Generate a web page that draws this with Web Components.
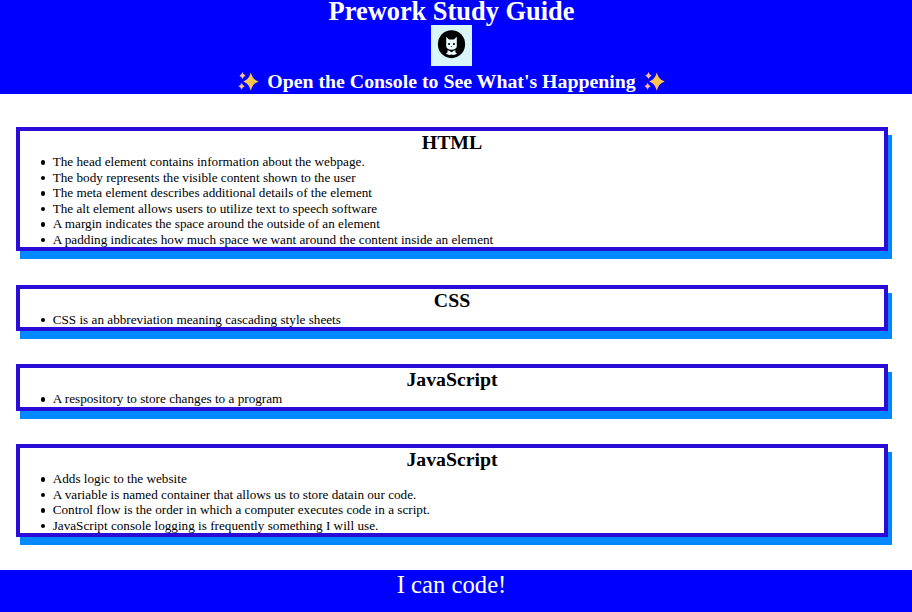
<!DOCTYPE html>
<html lang="en">
<head>
<meta charset="utf-8">
<title>Prework Study Guide</title>
<style>
body{margin:0;background:#fff;font-family:"Liberation Serif","Times New Roman",serif;color:#000}
</style>
</head>
<body>
<study-page></study-page>
<script>
function define(name, html){
  const t=document.createElement('template');
  t.innerHTML=html;
  customElements.define(name,class extends HTMLElement{
    constructor(){super();this.attachShadow({mode:'open'}).append(t.content.cloneNode(true));}
  });
}
define('spark-icon',`<style>:host{display:inline-block;width:21px;height:21px}svg{display:block}</style>
<svg width="21" height="21" viewBox="0 0 21 21"><path fill="#ffc44e" d="M12.8 1.5C14.6 7 16 8.5 20.8 10.5C16 12.5 14.6 14 12.8 19.8C11 14 9.6 12.5 5.2 10.5C9.6 8.5 11 7 12.8 1.5Z"/><path fill="#f7bba6" d="M4.5 1Q5.3 4 7.6 4.8Q5.3 5.6 4.5 8Q3.7 5.6 1.4 4.8Q3.7 4 4.5 1ZM3.6 11.8Q4.4 14.5 6.8 15.3Q4.4 16.1 3.6 18.8Q2.8 16.1 .4 15.3Q2.8 14.5 3.6 11.8Z"/></svg>`);
define('cat-logo',`<style>:host{display:block;width:41px;height:41px;background:#d9f5f7}svg{display:block}</style>
<svg width="41" height="41" viewBox="0 0 41 41"><ellipse cx="20.5" cy="19.2" rx="13.6" ry="14"/><g fill="#effcfc"><path d="M15.2 11.8L18 14.4H23L25.8 11.8V21.5Q25.3 24.5 20.5 24.7Q15.7 24.5 15.2 21.5Z"/><path d="M16.6 25.2L19.3 26V27H21.7V26L24.4 25.2V27.3L26 28.6Q23.5 30.6 20.5 29.6Q17.5 30.6 15 28.6L16.6 27.3Z"/></g><ellipse cx="18.1" cy="19" rx="1.1" ry="1.1"/><ellipse cx="22.9" cy="19" rx="1.1" ry="1.1"/><path d="M19.7 21H21.3L20.5 22Z"/></svg>`);
define('page-banner',`<style>:host{display:flex;flex-direction:column;align-items:center;box-sizing:border-box;height:94px;padding-right:9px;background:#00f;color:#fff}
h1{margin:0 0 3px;font-size:26.4px;line-height:22px}
h2{display:flex;gap:8px;margin:4px 0 0;font-size:19.82px;line-height:23px;white-space:nowrap}spark-icon{margin-top:1px}</style>
<h1><slot></slot></h1><cat-logo></cat-logo><h2><spark-icon></spark-icon><slot name="note"></slot><spark-icon></spark-icon></h2>`);
define('topic-card',`<style>:host{display:block;box-sizing:border-box;border:4px solid #2a0bd8;box-shadow:4px 8px 0 #0088ff;font-size:13.2px;background:#fff}
h2{margin:0;text-align:center;font-size:19.8px;line-height:23px}
ul{margin:0;padding:0 0 0 20.6px;line-height:15.55px}</style>
<h2><slot name="title"></slot></h2><ul><slot></slot></ul>`);
define('topic-item',`<style>:host{display:flex;align-items:center;white-space:nowrap}:host::before{content:"";width:4.6px;height:4.6px;margin:1px 7.5px 0 0;border-radius:50%;background:#000}</style><slot></slot>`);
define('page-footer',`<style>:host{display:block;box-sizing:border-box;height:41.7px;padding-right:9px;background:#00f;color:#fff;text-align:center;font-size:24.7px;line-height:29px}</style><slot></slot>`);
define('study-page',`<style>:host{display:flex;flex-direction:column;height:612px;overflow:hidden}
main{display:flex;flex-direction:column;gap:33.3px;box-sizing:border-box;padding:33px 24px 0 16px;height:476.3px}</style>
<page-banner>Prework Study Guide<span slot="note">Open the Console to See What's Happening</span></page-banner>
<main>
<topic-card><span slot="title">HTML</span><topic-item>The head element contains information about the webpage.</topic-item><topic-item>The body represents the visible content shown to the user</topic-item><topic-item>The meta element describes additional details of the element</topic-item><topic-item>The alt element allows users to utilize text to speech software</topic-item><topic-item>A margin indicates the space around the outside of an element</topic-item><topic-item>A padding indicates how much space we want around the content inside an element</topic-item></topic-card>
<topic-card><span slot="title">CSS</span><topic-item>CSS is an abbreviation meaning cascading style sheets</topic-item></topic-card>
<topic-card><span slot="title">JavaScript</span><topic-item>A respository to store changes to a program</topic-item></topic-card>
<topic-card><span slot="title">JavaScript</span><topic-item>Adds logic to the website</topic-item><topic-item>A variable is named container that allows us to store datain our code.</topic-item><topic-item>Control flow is the order in which a computer executes code in a script.</topic-item><topic-item>JavaScript console logging is frequently something I will use.</topic-item></topic-card>
</main>
<page-footer>I can code!</page-footer>`);
</script>
</body>
</html>
